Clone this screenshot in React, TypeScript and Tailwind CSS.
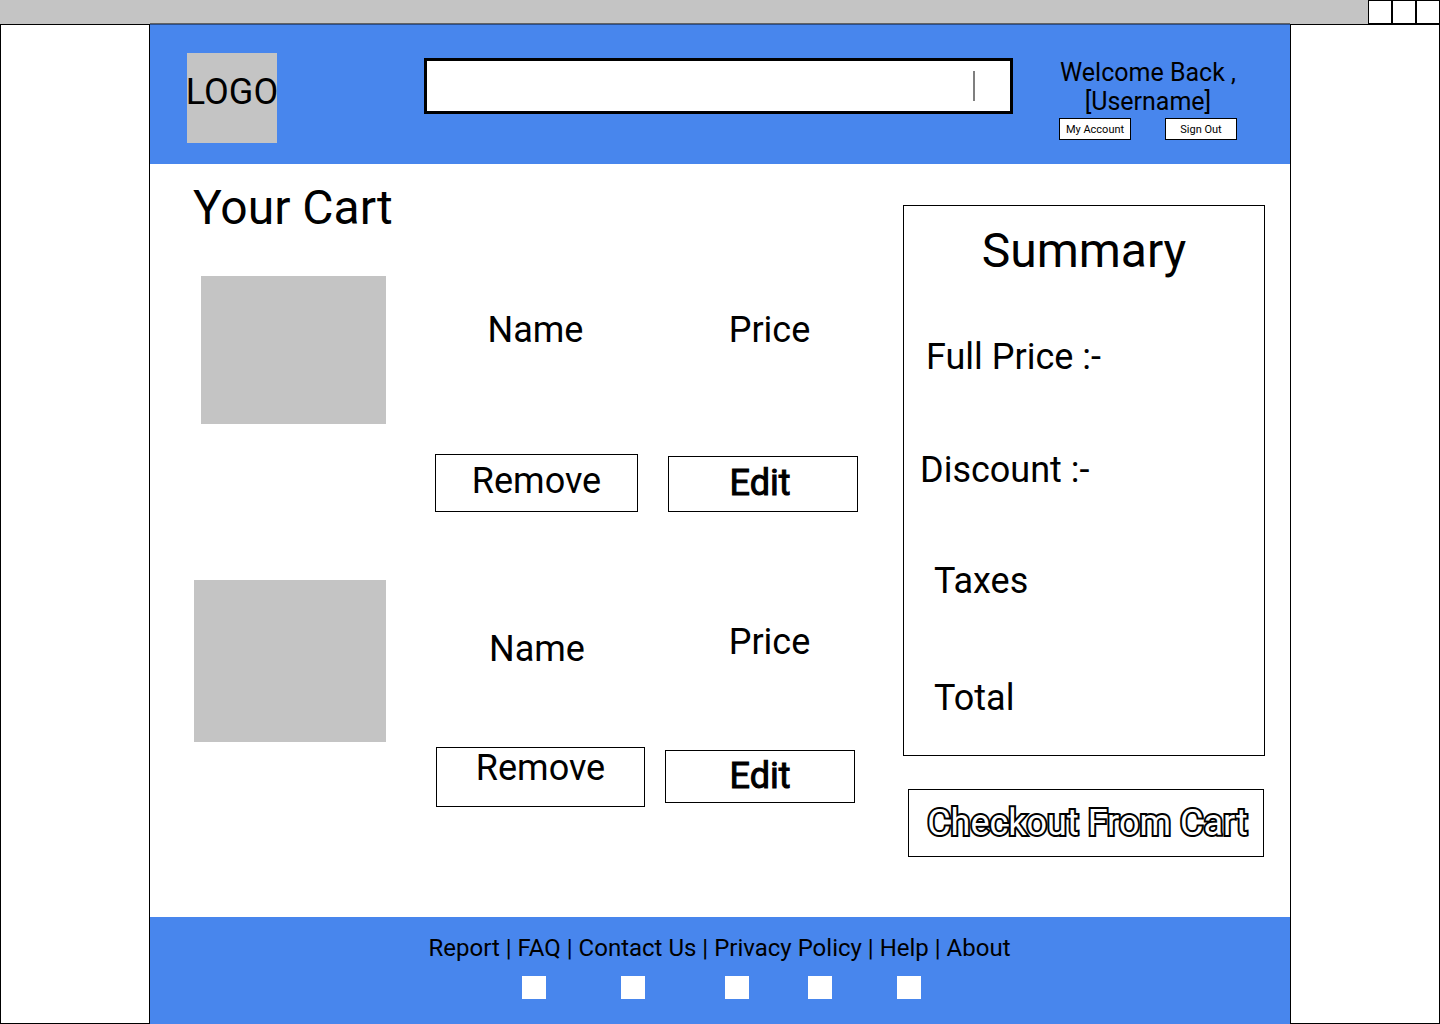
import React from "react";

type CartItem = {
  id: string;
  image: string;
  nameColumn: string;
  name: string;
  remove: string;
  priceColumn: string;
  price: string;
  edit: string;
};

const items: CartItem[] = [
  {
    id: "first",
    image: "ml-[7px] w-[185px] h-[148px]",
    nameColumn: "ml-[49px] w-[203px] pt-[33px]",
    name: "pr-0.5",
    remove: "mt-[103px] h-[58px] pb-1",
    priceColumn: "ml-[30px] pt-[33px]",
    price: "pl-[13px]",
    edit: "mt-[105px] h-14 pr-1.5 pb-0.5",
  },
  {
    id: "second",
    image: "w-[192px] h-[162px]",
    nameColumn: "ml-[50px] w-[209px] pt-12",
    name: "pr-[7px]",
    remove: "mt-[77px] h-[60px] pb-[18px]",
    priceColumn: "ml-5 pt-[41px]",
    price: "pl-[19px]",
    edit: "mt-[87px] h-[53px] pb-0.5",
  },
];

const links = ["Report", "FAQ", "Contact Us", "Privacy Policy", "Help", "About"];

const socials = [
  { label: "Social link 1", gap: "" },
  { label: "Social link 2", gap: "ml-[75px]" },
  { label: "Social link 3", gap: "ml-20" },
  { label: "Social link 4", gap: "ml-[59px]" },
  { label: "Social link 5", gap: "ml-[65px]" },
];

function TitleBar() {
  return (
    <div className="flex h-6 justify-end bg-[#c4c4c4]">
      <button aria-label="Minimize" className="size-6 border border-black bg-white" />
      <button aria-label="Maximize" className="size-6 border border-black bg-white" />
      <button aria-label="Close" className="size-6 border border-black bg-white" />
    </div>
  );
}

function Header() {
  return (
    <header className="relative flex items-start border-t border-[#2b4f8c] bg-[#4886ed] pt-7 pr-[53px] pb-[21px] pl-[37px] shadow-[0_-1px_0_#626262]">
      <a
        href="#home"
        className="flex size-[90px] shrink-0 justify-center bg-[#c4c4c4] pt-[18px] text-4xl leading-[42px]"
      >
        LOGO
      </a>
      <form className="relative mt-[5px] ml-[147px] min-w-0 flex-1">
        <input
          type="search"
          aria-label="Search"
          className="block h-14 w-full border-3 border-black bg-white pr-12 pl-4 text-2xl outline-none"
        />
        <span className="absolute top-[13px] right-[38px] h-[30px] w-0.5 bg-[#7f7f7f]" />
      </form>
      <div className="mt-[5px] ml-[46px] w-[178px] shrink-0">
        <p className="text-center text-[25px] leading-[29px] whitespace-nowrap">
          Welcome Back ,<br />
          [Username]
        </p>
        <div className="mt-0.5 flex justify-between">
          <button className="h-[22px] w-[72px] border border-black bg-white text-[11px] leading-[13px]">
            My Account
          </button>
          <button className="h-[22px] w-[72px] border border-black bg-white text-[11px] leading-[13px]">
            Sign Out
          </button>
        </div>
      </div>
    </header>
  );
}

function CartRow({ item }: { item: CartItem }) {
  return (
    <li className="flex items-start text-center text-4xl leading-[42px]">
      <div className={`shrink-0 bg-[#c4c4c4] ${item.image}`} />
      <div className={`flex flex-col ${item.nameColumn}`}>
        <p className={item.name}>Name</p>
        <button className={`flex items-center justify-center border border-black ${item.remove}`}>
          Remove
        </button>
      </div>
      <div className={`flex w-[190px] flex-col ${item.priceColumn}`}>
        <p className={item.price}>Price</p>
        <button
          className={`flex items-center justify-center border border-black [-webkit-text-stroke:1px_black] ${item.edit}`}
        >
          Edit
        </button>
      </div>
    </li>
  );
}

function Summary() {
  return (
    <aside className="mt-[41px] mr-[25px] w-[362px] shrink-0">
      <section className="border border-black pt-[17px] pb-9 text-4xl leading-[42px]">
        <h2 className="text-center text-5xl leading-[56px]">Summary</h2>
        <p className="mt-[57px] pl-[22px]">Full Price :-</p>
        <p className="mt-[71px] pl-4">Discount :-</p>
        <p className="mt-[69px] pl-[30px]">Taxes</p>
        <p className="mt-[75px] pl-[30px]">Total</p>
      </section>
      <button className="mt-[33px] mr-px ml-[5px] flex h-[68px] w-[356px] items-center justify-center border border-black pl-[3px] text-4xl leading-[42px] whitespace-nowrap text-white [-webkit-text-stroke:4px_black] [paint-order:stroke_fill]">
        Checkout From Cart
      </button>
    </aside>
  );
}

function Footer() {
  return (
    <footer className="bg-[#4886ed] pt-[17px] pb-[25px]">
      <nav className="flex justify-center pr-px text-2xl leading-7 whitespace-pre">
        {links.map((link, index) => (
          <React.Fragment key={link}>
            {index > 0 && <span> | </span>}
            <a href="#footer">{link}</a>
          </React.Fragment>
        ))}
      </nav>
      <div className="mt-3.5 flex justify-center pl-[3px]">
        {socials.map((social) => (
          <a
            key={social.label}
            href="#social"
            aria-label={social.label}
            className={`h-[23px] w-6 bg-white ${social.gap}`}
          />
        ))}
      </div>
    </footer>
  );
}

export default function App() {
  return (
    <div className="flex min-h-screen flex-col bg-white font-['Roboto',sans-serif] text-black">
      <TitleBar />
      <div className="flex flex-1">
        <div className="w-[150px] shrink-0 border border-black" />
        <div className="flex min-w-0 flex-1 flex-col">
          <Header />
          <main className="flex flex-1 justify-between">
            <section className="pt-4 pl-[43px]">
              <h1 className="text-5xl leading-[56px]">Your Cart</h1>
              <ul className="mt-10 ml-px flex flex-col gap-[68px]">
                {items.map((item) => (
                  <CartRow key={item.id} item={item} />
                ))}
              </ul>
            </section>
            <Summary />
          </main>
          <Footer />
        </div>
        <div className="w-[150px] shrink-0 border border-black" />
      </div>
    </div>
  );
}
